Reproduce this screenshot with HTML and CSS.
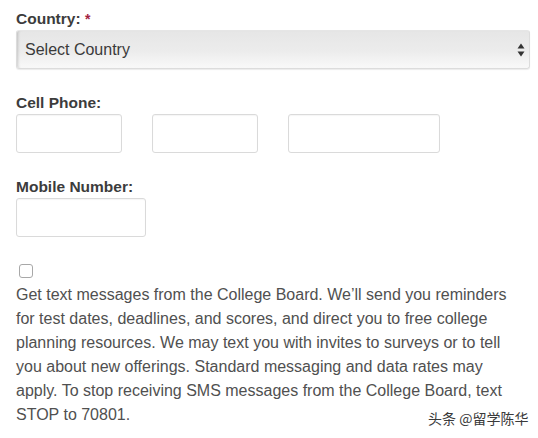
FILE: index.html
```html
<!DOCTYPE html>
<html lang="en">
<head>
<meta charset="utf-8">
<title>Contact form</title>
<link rel="stylesheet" href="styles.css">
</head>
<body>
<form class="form">
  <div class="field">
    <label class="label" for="country">Country: <span class="req">*</span></label>
    <div class="select-wrap">
      <select id="country" class="select">
        <option>Select Country</option>
      </select>
      <svg class="select-arrows" width="8" height="14" viewBox="0 0 8 14" aria-hidden="true">
        <path d="M4 0.5 L7.5 5.5 L0.5 5.5 Z" fill="#333"/>
        <path d="M4 13.5 L7.5 8.5 L0.5 8.5 Z" fill="#333"/>
      </svg>
    </div>
  </div>

  <div class="field">
    <label class="label">Cell Phone:</label>
    <div class="phone-row">
      <input class="input w-area" type="text" aria-label="Area code">
      <input class="input w-pre" type="text" aria-label="Prefix">
      <input class="input w-line" type="text" aria-label="Line number">
    </div>
  </div>

  <div class="field">
    <label class="label" for="mobile">Mobile Number:</label>
    <input id="mobile" class="input w-mobile" type="text">
  </div>

  <div class="consent">
    <input class="check" type="checkbox" aria-label="Get text messages">
    <p class="consent-text">Get text messages from the College Board. We’ll send you reminders for test dates, deadlines, and scores, and direct you to free college planning resources. We may text you with invites to surveys or to tell you about new offerings. Standard messaging and data rates may apply. To stop receiving SMS messages from the College Board, text STOP to 70801.</p>
  </div>
</form>
<div class="watermark">头条 @留学陈华</div>
</body>
</html>
```

FILE: styles.css
```css
html, body {
  margin: 0;
  padding: 0;
  background: #ffffff;
}

body {
  position: relative;
  width: 538px;
  height: 438px;
  overflow: hidden;
  font-family: "Liberation Sans", Arial, sans-serif;
  color: #444;
}

.form {
  padding: 10px 16px 0 16px;
}

.field {
  margin-bottom: 25px;
}

.label {
  display: block;
  font-size: 15.5px;
  font-weight: bold;
  line-height: 18px;
  color: #3c3c3c;
  margin-bottom: 2px;
}

.req {
  color: #a3223f;
  font-size: 14px;
}

.select-wrap {
  position: relative;
  width: 514px;
}

.select {
  -webkit-appearance: none;
  appearance: none;
  display: block;
  width: 514px;
  height: 39px;
  margin: 0;
  padding: 0 0 0 8px;
  border: 1px solid #dcdcdc;
  border-top-color: #e6e6e6;
  border-radius: 3px;
  background: linear-gradient(to bottom, #e6e6e6 0%, #ececec 55%, #f9f9f9 100%);
  box-shadow: inset 3px 0 3px -2px rgba(0,0,0,0.18), 0 1px 1px rgba(0,0,0,0.08);
  font-family: "Liberation Sans", Arial, sans-serif;
  font-size: 16px;
  color: #3a3a3a;
  outline: none;
}

.select-arrows {
  position: absolute;
  right: 5px;
  top: 13px;
  pointer-events: none;
}

.phone-row {
  display: flex;
  gap: 30px;
}

.input {
  display: block;
  box-sizing: border-box;
  height: 39px;
  margin: 0;
  padding: 0 6px;
  border: 1px solid #dadada;
  border-radius: 3px;
  background: #fff;
  box-shadow: inset 0 1px 1px rgba(0,0,0,0.04);
  outline: none;
}

.w-area { width: 106px; }
.w-pre { width: 106px; }
.w-line { width: 152px; }
.w-mobile { width: 130px; }

.consent {
  margin-top: 27px;
}

.check {
  -webkit-appearance: none;
  appearance: none;
  display: block;
  box-sizing: border-box;
  width: 14px;
  height: 14px;
  margin: 0 0 0 3px;
  border: 1px solid #a8a8a8;
  border-radius: 3px;
  background: #fff;
}

.consent-text {
  margin: 5px 0 0 0;
  width: 508px;
  font-size: 16px;
  line-height: 24px;
  color: #505050;
}

.watermark {
  position: absolute;
  left: 428px;
  top: 408px;
  font-family: "Noto Sans CJK SC", sans-serif;
  font-size: 14px;
  line-height: 20px;
  color: #3a3a3a;
  text-shadow: 0 0 2px #fff;
}
```
